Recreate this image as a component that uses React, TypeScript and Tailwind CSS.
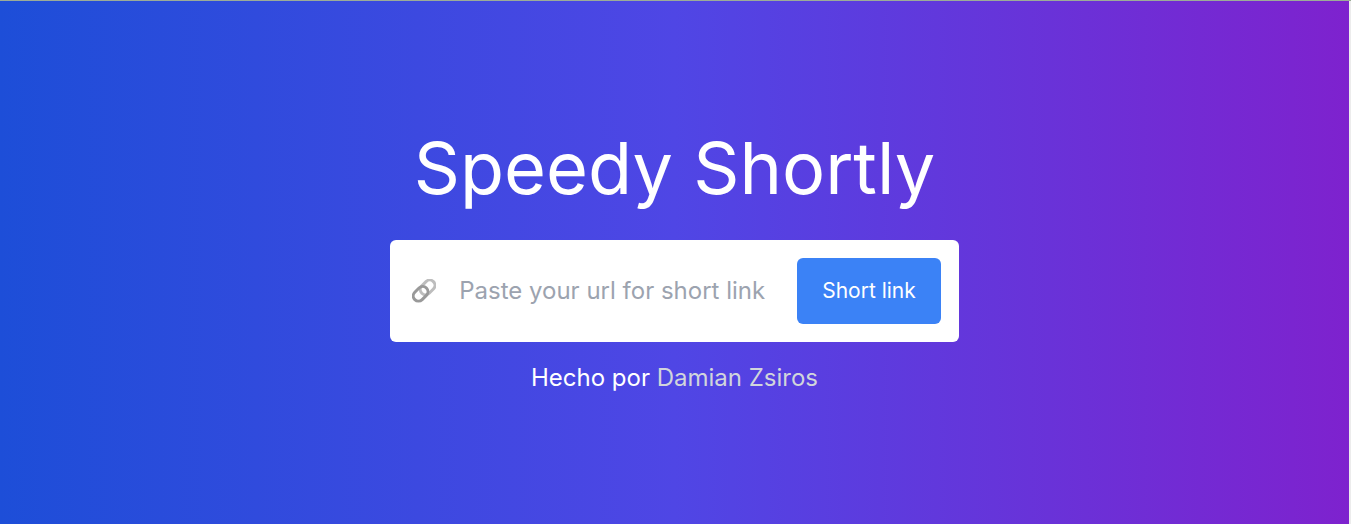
export default function App() {
  return (
    <div className="flex min-h-screen flex-col border-t border-[#9cac98] bg-[#ececec] pr-0.5 font-['Inter',sans-serif] text-2xl text-white">
      <main className="flex grow flex-col items-center justify-center bg-linear-to-r/srgb from-[#1d4ed8] via-[#4f46e5] to-[#7e22ce]">
        <h1 className="text-7xl leading-none">Speedy Shortly</h1>
        <form
          className="mt-9 flex items-center rounded-md bg-white p-[18px]"
          onSubmit={(event) => event.preventDefault()}
        >
          <label htmlFor="url" aria-label="Url" className="px-1">
            <svg className="size-6" viewBox="0 0 24 24" fill="none" strokeWidth="3" aria-hidden="true">
              <rect x="7.4" y="3.2" width="16.4" height="10.4" rx="5.2" stroke="#bdbdbd" transform="rotate(-45 15.6 8.4)" />
              <rect x="0.4" y="9.6" width="16.4" height="10.4" rx="5.2" stroke="#999999" transform="rotate(-45 8.6 14.8)" />
            </svg>
          </label>
          <input
            id="url"
            type="text"
            className="ml-[19px] w-[320px] text-gray-700 outline-none placeholder:text-[#9ca3af]"
            placeholder="Paste your url for short link"
          />
          <button type="submit" className="ml-[18px] h-[66px] rounded-md bg-[#3b82f6] px-[25px] text-[21px]">
            Short link
          </button>
        </form>
        <p className="mt-5 leading-8">
          Hecho por{" "}
          <a href="#author" className="text-[#d1d5db]">
            Damian Zsiros
          </a>
        </p>
      </main>
    </div>
  );
}
